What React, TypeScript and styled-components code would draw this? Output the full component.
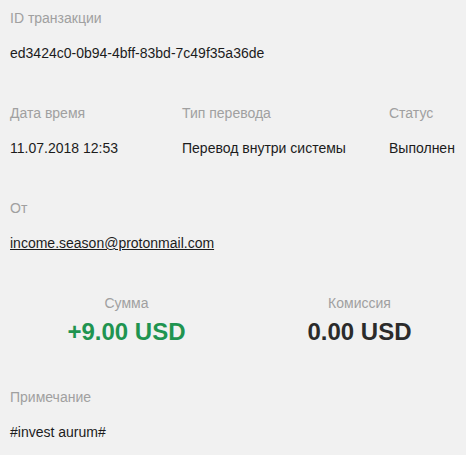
import React from "react";
import styled, { createGlobalStyle } from "styled-components";

const Global = createGlobalStyle`
  html, body { margin: 0; padding: 0; background: #f1f1f1; }
  body { font-family: "Liberation Sans", Arial, sans-serif; }
`;

const Page = styled.div`
  background: #f1f1f1;
  height: 455px;
  padding: 8px 10px 0 10px;
  box-sizing: border-box;
  font-family: "Liberation Sans", Arial, sans-serif;
  font-size: 14px;
  line-height: 20px;
  overflow: hidden;
`;

const Section = styled.section`
  margin-bottom: 40px;
  &:last-child { margin-bottom: 0; }
`;

const Grid = styled.div`
  display: grid;
  grid-template-columns: 172px 207px auto;
  margin-bottom: 40px;
`;

const Label = styled.div`
  color: #a0a0a0;
  margin-bottom: 15px;
  white-space: nowrap;
`;

const Value = styled.div`
  color: #1c1c1c;
  white-space: nowrap;
`;

const Email = styled.a`
  color: #1c1c1c;
  text-decoration: underline;
`;

const Amounts = styled.div`
  display: grid;
  grid-template-columns: 233px 233px;
  margin-bottom: 41px;
`;

const AmountCol = styled.div`
  display: flex;
  flex-direction: column;
  align-items: center;
`;

const AmountLabel = styled.div`
  color: #a0a0a0;
  margin-bottom: 5px;
`;

const Amount = styled.div<{ $positive?: boolean }>`
  font-size: 24px;
  line-height: 28px;
  font-weight: 700;
  color: ${(p) => (p.$positive ? "#1f9450" : "#2b2b2b")};
  white-space: nowrap;
`;

export default function App() {
  return (
    <>
      <Global />
      <Page>
        <Section>
          <Label>ID транзакции</Label>
          <Value>ed3424c0-0b94-4bff-83bd-7c49f35a36de</Value>
        </Section>
        <Grid>
          <div>
            <Label>Дата время</Label>
            <Value>11.07.2018 12:53</Value>
          </div>
          <div>
            <Label>Тип перевода</Label>
            <Value>Перевод внутри системы</Value>
          </div>
          <div>
            <Label>Статус</Label>
            <Value>Выполнен</Value>
          </div>
        </Grid>
        <Section>
          <Label>От</Label>
          <Value>
            <Email href="#">income.season@protonmail.com</Email>
          </Value>
        </Section>
        <Amounts>
          <AmountCol>
            <AmountLabel>Сумма</AmountLabel>
            <Amount $positive>+9.00 USD</Amount>
          </AmountCol>
          <AmountCol>
            <AmountLabel>Комиссия</AmountLabel>
            <Amount>0.00 USD</Amount>
          </AmountCol>
        </Amounts>
        <Section>
          <Label>Примечание</Label>
          <Value>#invest aurum#</Value>
        </Section>
      </Page>
    </>
  );
}
